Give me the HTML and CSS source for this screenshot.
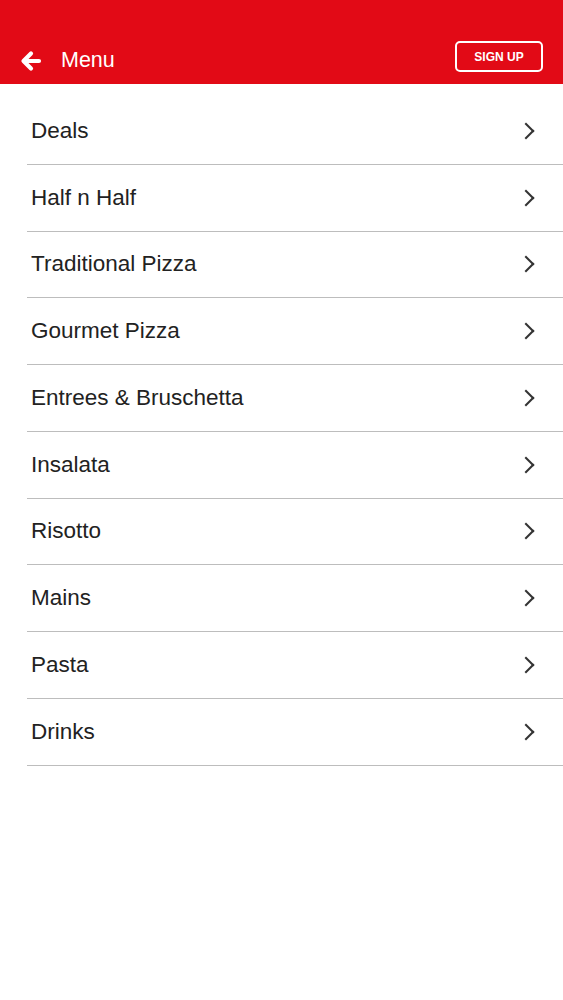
FILE: index.html
```html
<!DOCTYPE html>
<html lang="en">
<head>
    <meta charset="UTF-8">
    <meta name="viewport" content="width=device-width, initial-scale=1.0">
    <title>Menu</title>
    <link rel="stylesheet" href="styles.css">
</head>
<body>

<header class="top-bar">
    <a class="back-link" href="#">
        <svg class="back-icon" width="22" height="22" viewBox="0 0 22 22">
            <path d="M19 11H4M11 3.5L3.5 11L11 18.5" fill="none" stroke="#fff" stroke-width="4.2" stroke-linecap="round" stroke-linejoin="round"/>
        </svg>
        <span class="title">Menu</span>
    </a>
    <button class="signup-button">SIGN UP</button>
</header>

<ul class="menu-list">
    <li class="menu-item"><span>Deals</span><span class="chevron"></span></li>
    <li class="menu-item"><span>Half n Half</span><span class="chevron"></span></li>
    <li class="menu-item"><span>Traditional Pizza</span><span class="chevron"></span></li>
    <li class="menu-item"><span>Gourmet Pizza</span><span class="chevron"></span></li>
    <li class="menu-item"><span>Entrees &amp; Bruschetta</span><span class="chevron"></span></li>
    <li class="menu-item"><span>Insalata</span><span class="chevron"></span></li>
    <li class="menu-item"><span>Risotto</span><span class="chevron"></span></li>
    <li class="menu-item"><span>Mains</span><span class="chevron"></span></li>
    <li class="menu-item"><span>Pasta</span><span class="chevron"></span></li>
    <li class="menu-item"><span>Drinks</span><span class="chevron"></span></li>
</ul>

</body>
</html>
```

FILE: styles.css
```css
/* Menu screen */
body {
    margin: 0;
    font-family: "Liberation Sans", Arial, sans-serif;
    background-color: #fff;
    color: #222;
}
.top-bar {
    height: 84px;
    background-color: #e20a16;
    display: flex;
    align-items: flex-end;
    justify-content: space-between;
    padding: 0 20px 12px 20px;
    box-sizing: border-box;
}
.back-link {
    display: flex;
    align-items: center;
    color: #fff;
    text-decoration: none;
    margin-bottom: -1px;
}
.back-icon {
    display: block;
}
.title {
    margin-left: 19px;
    font-size: 21.5px;
}
.signup-button {
    width: 88px;
    height: 31px;
    background: transparent;
    border: 2px solid #fff;
    border-radius: 5px;
    color: #fff;
    font-family: inherit;
    font-weight: bold;
    font-size: 12px;
    padding: 0;
    cursor: pointer;
}
.menu-list {
    list-style: none;
    margin: 0;
    padding: 14px 0 0 27px;
}
.menu-item {
    height: 65.75px;
    border-bottom: 1px solid #bdbdbd;
    display: flex;
    align-items: center;
    justify-content: space-between;
    padding: 0 31px 0 4px;
    font-size: 22.5px;
}
.chevron {
    width: 10px;
    height: 10px;
    border-top: 2px solid #333;
    border-right: 2px solid #333;
    transform: rotate(45deg);
}
```
